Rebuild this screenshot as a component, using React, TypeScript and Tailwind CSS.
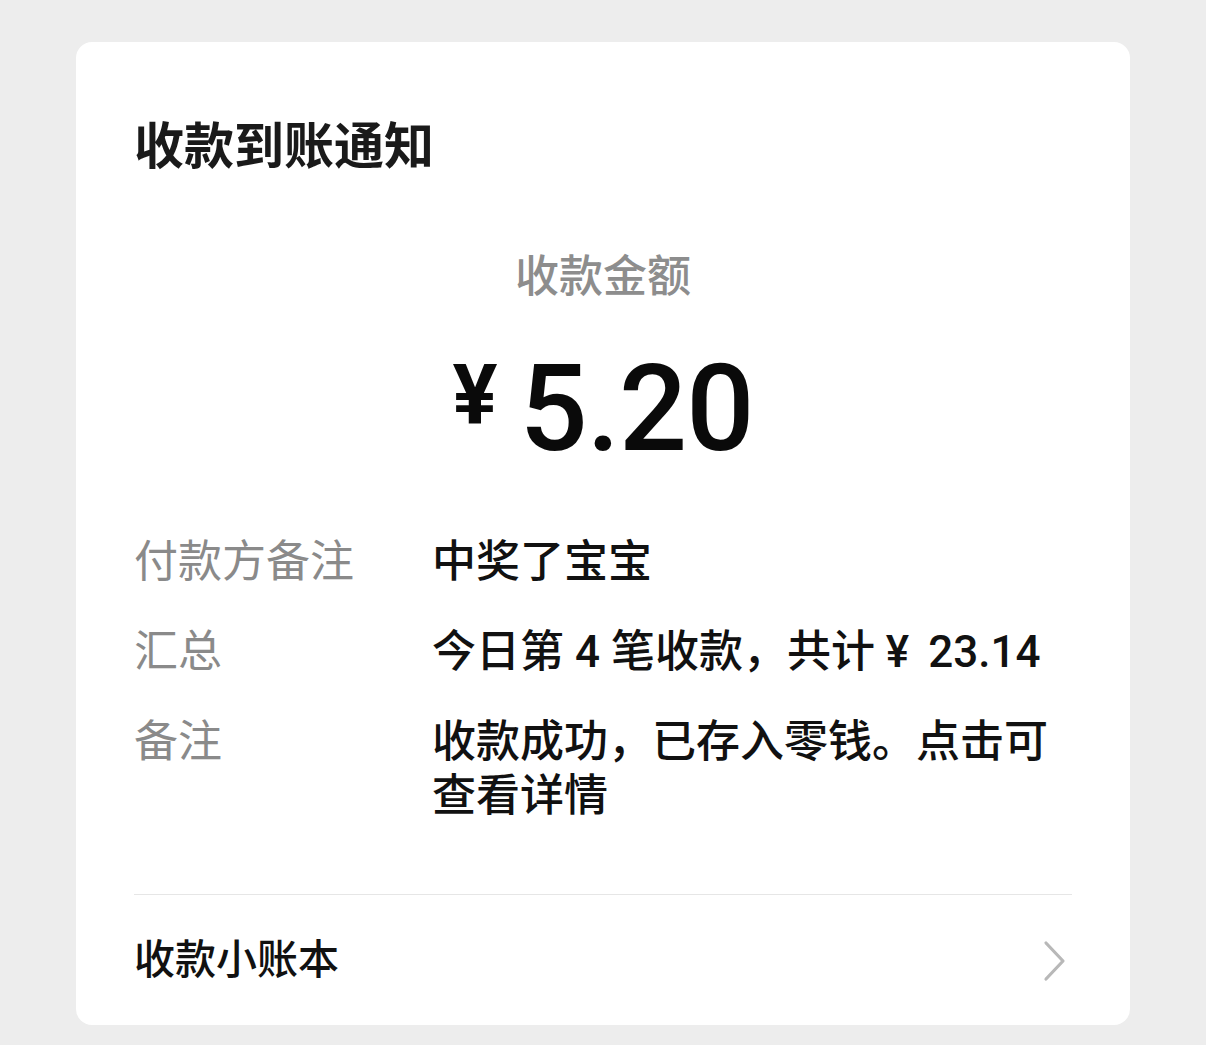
/**
 * Payment received notification card
 * Shows the amount, payer note, daily summary and a link to the ledger
 */

const cjk = "font-['Roboto','Noto_Sans_CJK_SC',sans-serif]";

interface DetailRowProps {
  label: string;
  value: React.ReactNode;
}

function DetailRow({ label, value }: DetailRowProps) {
  return (
    <div className="flex text-[44px] leading-[54px]">
      <div className="w-[298px] shrink-0 text-[#8a8a8a]">{label}</div>
      <div className="flex-1 font-medium text-[#111111]">{value}</div>
    </div>
  );
}

function Chevron() {
  return (
    <svg width="26" height="42" viewBox="0 0 26 42" fill="none" className="mr-[4px]">
      <path
        d="M4 3 L21 21 L4 39"
        stroke="#b8b8b8"
        strokeWidth="3.2"
        strokeLinecap="round"
        strokeLinejoin="round"
      />
    </svg>
  );
}

export default function App() {
  return (
    <div className={`min-h-[1045px] bg-[#ededed] px-[76px] pt-[42px] ${cjk}`}>
      <div className="h-[983px] rounded-[16px] bg-white px-[58px] pt-[75px]">
        <h1 className="text-[50px] font-bold leading-[60px] text-[#1a1a1a]">收款到账通知</h1>

        <div className="mt-[70px] text-center text-[44px] font-medium leading-[60px] text-[#8d8d8d]">
          收款金额
        </div>

        <div className="mt-[37px] flex h-[130px] items-start justify-center text-[#0a0a0a]">
          <span className="mr-[22px] mt-[10px] text-[84px] font-bold leading-[84px]">¥</span>
          <span className="text-[120px] font-medium leading-[130px] tracking-[-1px]">5.20</span>
        </div>

        <div className="mt-[61px] flex flex-col gap-[36px]">
          <DetailRow label="付款方备注" value="中奖了宝宝" />
          <DetailRow
            label="汇总"
            value={
              <>
                今日第 4 笔收款，共计 ¥<span className="ml-[19px]">23.14</span>
              </>
            }
          />
          <DetailRow label="备注" value="收款成功，已存入零钱。点击可查看详情" />
        </div>

        <div className="mt-[71px] border-t border-[#e6e6e6]" />

        <div className="flex h-[131px] items-center justify-between">
          <span className="text-[41px] font-medium text-[#111111]">收款小账本</span>
          <Chevron />
        </div>
      </div>
    </div>
  );
}
